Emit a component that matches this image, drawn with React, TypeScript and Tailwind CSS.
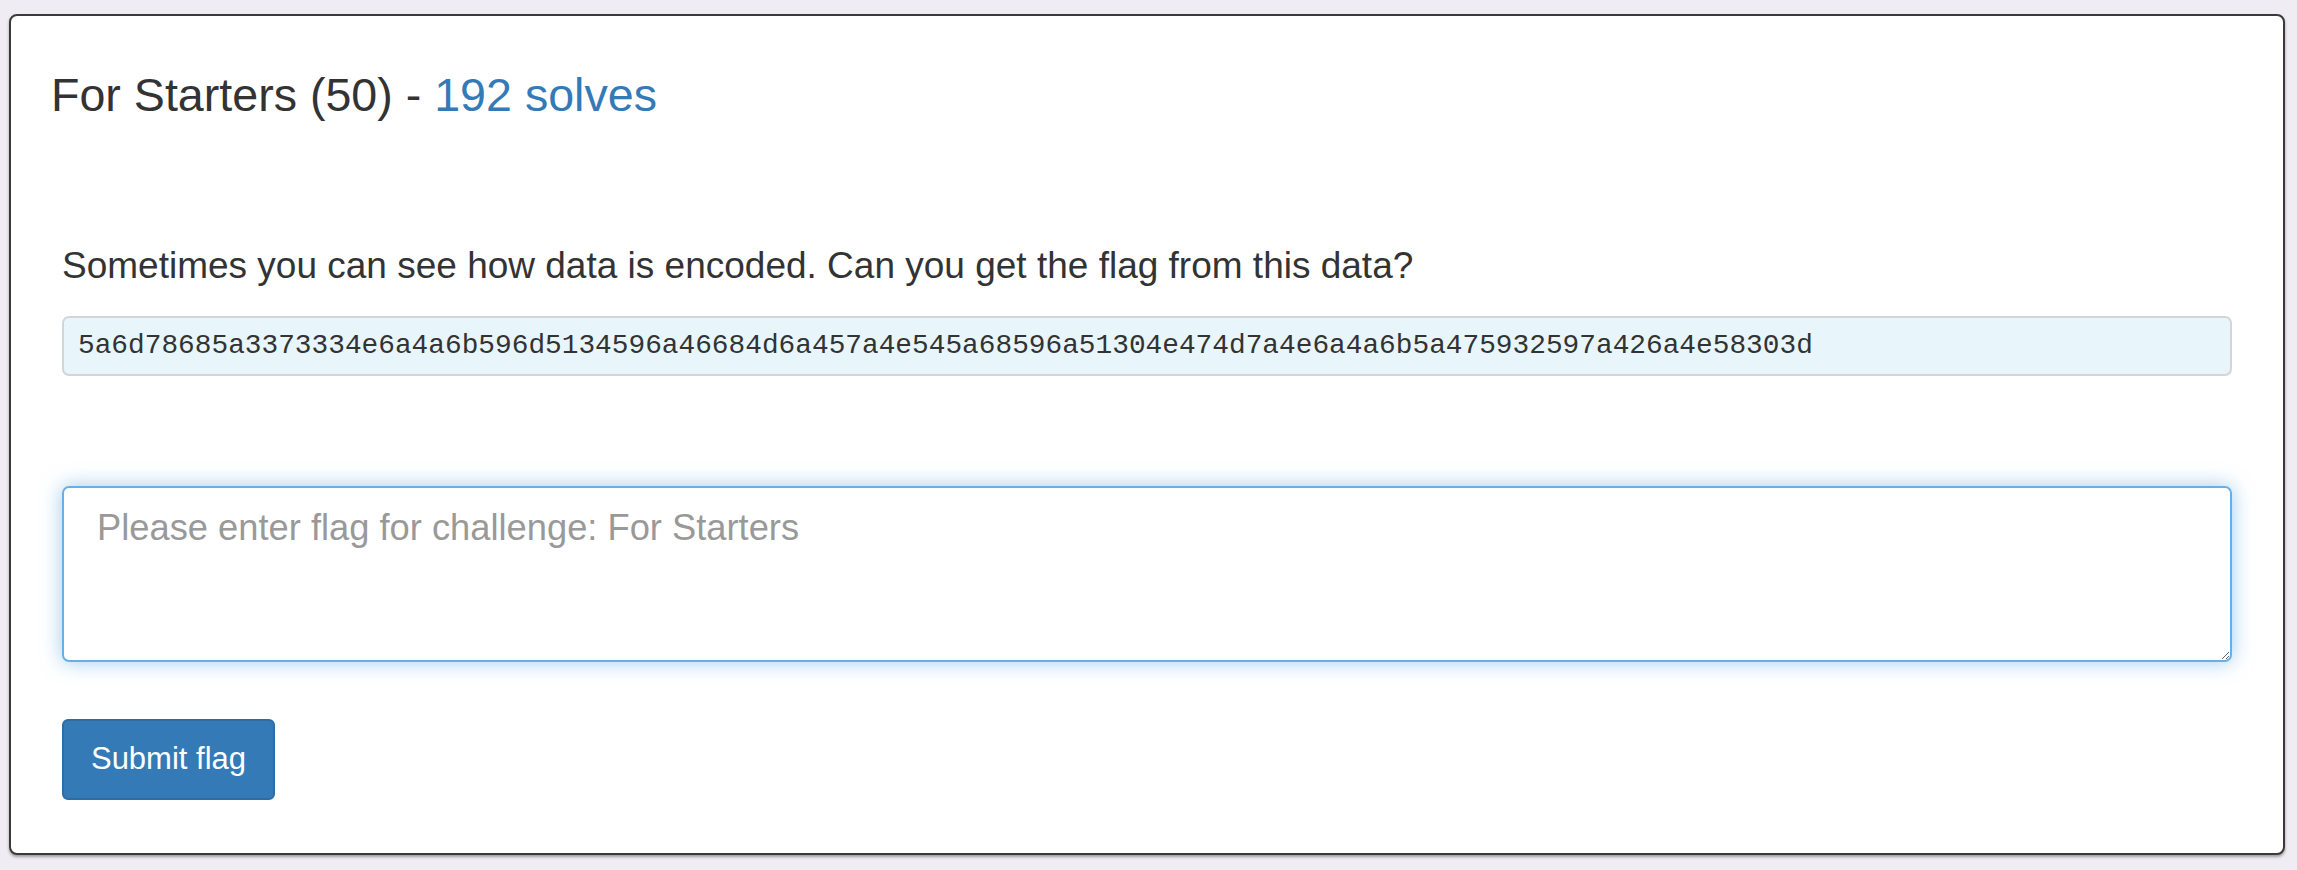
export default function App() {
  const challenge = {
    name: "For Starters",
    value: 50,
    solves: 192,
    description:
      "Sometimes you can see how data is encoded. Can you get the flag from this data?",
    data: "5a6d78685a3373334e6a4a6b596d5134596a46684d6a457a4e545a68596a51304e474d7a4e6a4a6b5a475932597a426a4e58303d",
  };

  return (
    <div className="min-h-[870px] w-full bg-[#efedf3] pt-[14px] pl-[9px] pr-[12px] pb-[15px] font-['Liberation_Sans',Arial,sans-serif] text-[#333]">
      <div className="h-[841px] rounded-[8px] border-2 border-[#3a3a3a] bg-white shadow-[0_2px_3px_rgba(0,0,0,0.35)]">
        <h3 className="px-[40px] pt-[53px] text-[46.6px] leading-[52px] font-normal">
          {challenge.name} ({challenge.value}) -{" "}
          <span className="text-[#337ab7]">{challenge.solves} solves</span>
        </h3>

        <div className="px-[51px] pt-[118px]">
          <p className="text-[37px] leading-[53px]">{challenge.description}</p>

          <div className="mt-[24px] h-[60px] rounded-[7px] border-2 border-[#d3d6d8] bg-[#e8f6fc] px-[14px] py-[8px] font-['Liberation_Mono',monospace] text-[27.8px] leading-[40px] text-[#333]">
            {challenge.data}
          </div>

          <textarea
            className="mt-[110px] block h-[176px] w-full resize-y rounded-[7px] border-2 border-[#66afe9] px-[33px] py-[14px] text-[36.3px] leading-[51px] text-[#555] shadow-[0_0_20px_rgba(102,175,233,0.65)] outline-none placeholder:text-[#999]"
            placeholder={`Please enter flag for challenge: ${challenge.name}`}
          />

          <button className="mt-[57px] h-[81px] w-[213px] rounded-[6px] border-2 border-[#2e6da4] bg-[#337ab7] text-[31px] text-white">
            Submit flag
          </button>
        </div>
      </div>
    </div>
  );
}
